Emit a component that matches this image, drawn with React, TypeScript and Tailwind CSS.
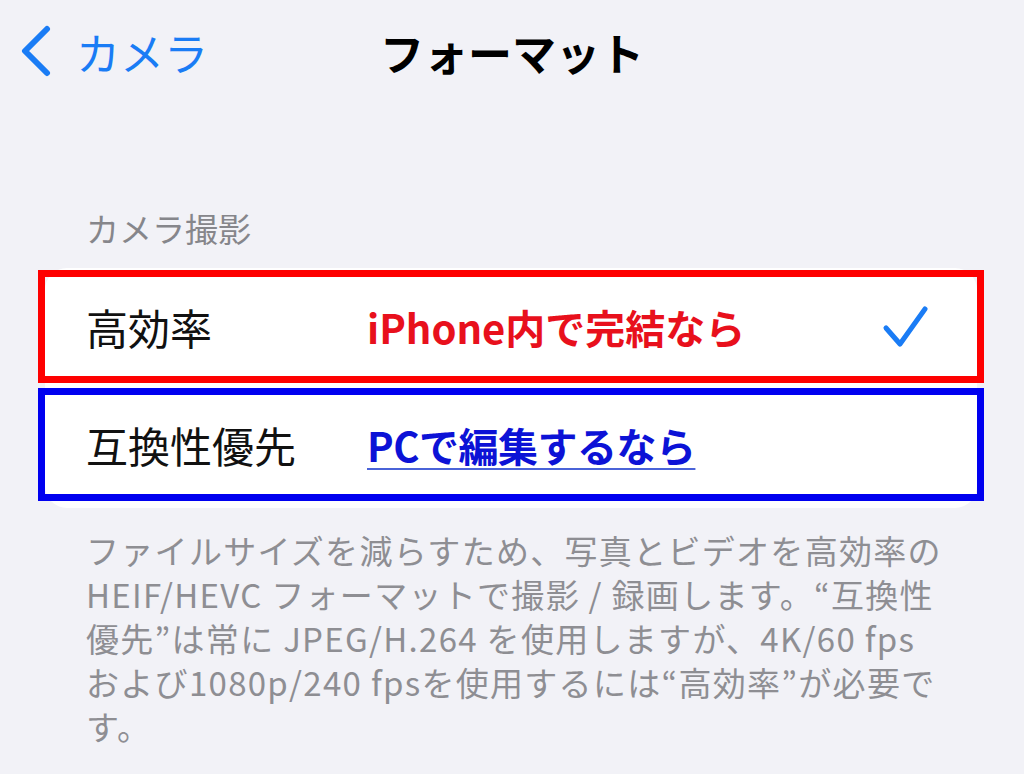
const JP = '[font-family:"Noto_Sans_CJK_JP","Noto_Sans",sans-serif]';

function BackChevron() {
  return (
    <svg width="34" height="54" viewBox="0 0 34 54" fill="none" className="shrink-0">
      <polyline
        points="27,4 5,26 27,48"
        stroke="#1a7cf5"
        strokeWidth="6"
        strokeLinecap="round"
        strokeLinejoin="round"
      />
    </svg>
  );
}

function Check() {
  return (
    <svg width="50" height="46" viewBox="0 0 50 46" fill="none">
      <polyline
        points="7,24 21,40 46,5"
        stroke="#1a7cf5"
        strokeWidth="5"
        strokeLinecap="round"
        strokeLinejoin="round"
      />
    </svg>
  );
}

export default function App() {
  return (
    <div className={`min-h-screen w-full bg-[#f2f2f7] ${JP}`}>
      {/* Navigation bar */}
      <div className="grid h-[104px] grid-cols-[1fr_auto_1fr] items-center">
        <div className="flex items-center gap-[22px] pl-[20px]">
          <BackChevron />
          <span className="text-[44px] leading-none text-[#1a7cf5]">カメラ</span>
        </div>
        <h1 className="text-[44px] font-bold leading-none text-black">フォーマット</h1>
        <div />
      </div>

      {/* Section header */}
      <p className="mt-[104px] pl-[86px] text-[33px] leading-[40px] text-[#86868b]">カメラ撮影</p>

      {/* Options card */}
      <div className="mt-[20px] ml-[45px] mr-[47px] rounded-[22px] bg-white pt-[2px] pb-[7px]">
        <div className="-mx-[7px] flex flex-col gap-[5px]">
          <div className="flex h-[113px] items-center border-[7px] border-[#fe0000] pl-[41px] pr-[48px]">
            <span className="w-[281px] text-[42px] leading-none text-[#111]">高効率</span>
            <span className="text-[40px] font-bold leading-none text-[#e8101c]">iPhone内で完結なら</span>
            <span className="ml-auto flex">
              <Check />
            </span>
          </div>
          <div className="flex h-[113px] items-center border-[7px] border-[#0000f0] pl-[41px]">
            <span className="w-[281px] text-[42px] leading-none text-[#111]">互換性優先</span>
            <span className="text-[40px] font-bold leading-none tracking-[-0.5px] text-[#0c12d6] underline decoration-[#4a63d8] decoration-2 underline-offset-[6px]">
              PCで編集するなら
            </span>
          </div>
        </div>
      </div>

      {/* Footer */}
      <p className="mt-[20px] pl-[86px] pr-[20px] text-[33px] leading-[44px] tracking-[1.3px] whitespace-nowrap text-[#8e8e93]">
        ファイルサイズを減らすため、写真とビデオを高効率の
        <br />
        HEIF/HEVC フォーマットで撮影 / 録画します。“互換性
        <br />
        優先”は常に JPEG/H.264 を使用しますが、4K/60 fps
        <br />
        および1080p/240 fpsを使用するには“高効率”が必要で
        <br />
        す。
      </p>
    </div>
  );
}
